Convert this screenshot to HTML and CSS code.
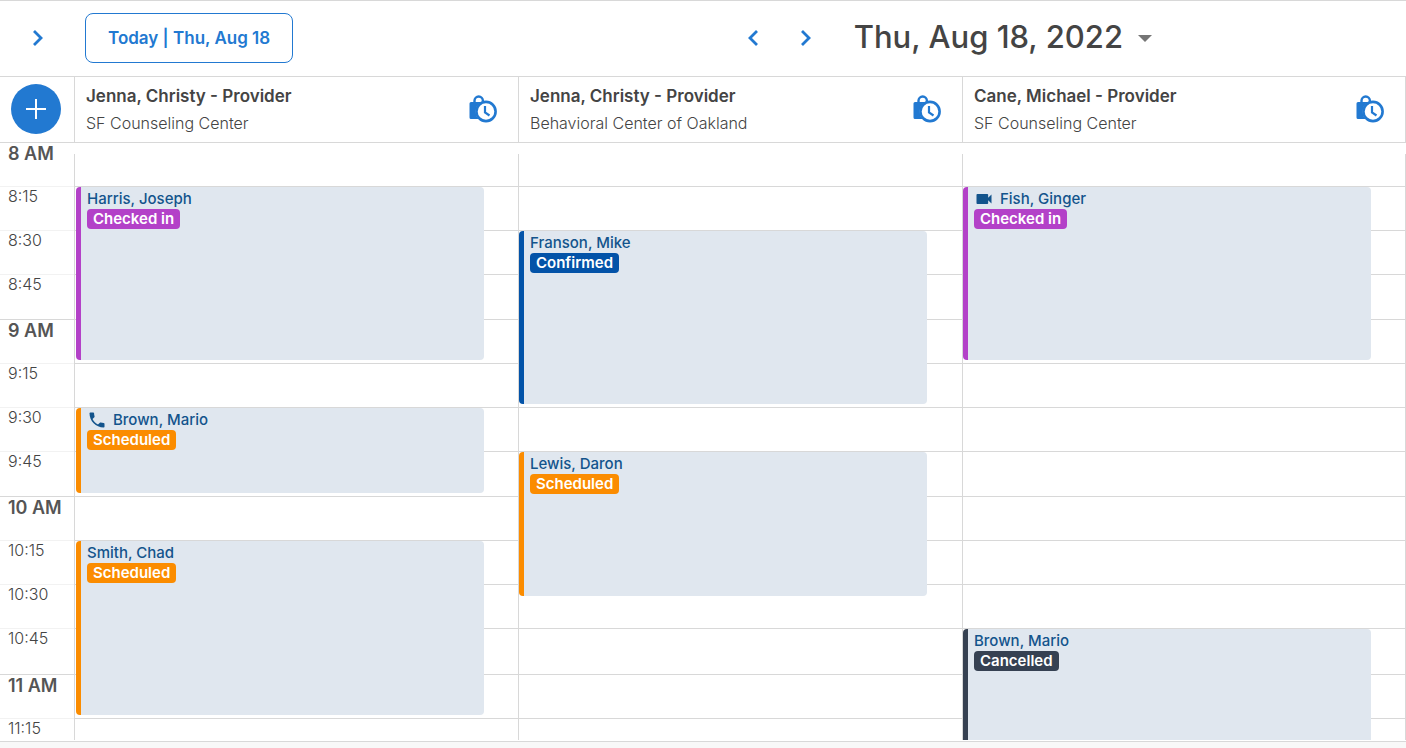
FILE: index.html
```html
<!DOCTYPE html>
<html lang="en">
<head>
    <meta charset="UTF-8">
    <meta name="viewport" content="width=device-width, initial-scale=1.0">
    <title>Calendar</title>
    <link rel="stylesheet" href="styles.css">
</head>
<body>
    <svg class="sprite" aria-hidden="true">
        <symbol id="icon-right" viewBox="0 0 24 24">
            <path d="M8 5l7 7-7 7" fill="none" stroke="currentColor" stroke-width="2.8"/>
        </symbol>
        <symbol id="icon-left" viewBox="0 0 24 24">
            <path d="M15 5l-7 7 7 7" fill="none" stroke="currentColor" stroke-width="2.8"/>
        </symbol>
        <symbol id="icon-block" viewBox="0 0 28 28">
            <path d="M5.500 9V5.700a4.200 4.200 0 0 1 8.400 0V9" fill="none" stroke="currentColor" stroke-width="2.400"/>
            <path d="M2 7h15v17H2a1.500 1.500 0 0 1-1.500-1.500v-14A1.500 1.500 0 0 1 2 7z" fill="currentColor"/>
            <circle cx="17" cy="16.500" r="10.500" fill="#fff"/>
            <circle cx="17" cy="16.500" r="9.600" fill="#fff" stroke="currentColor" stroke-width="2.600"/>
            <path d="M16 11v6.500l4.500 3" fill="none" stroke="currentColor" stroke-width="2.200"/>
        </symbol>
        <symbol id="icon-phone" viewBox="0 0 24 24">
            <path d="M6.62 10.79c1.44 2.83 3.76 5.14 6.59 6.59l2.2-2.2c.27-.27.67-.36 1.02-.24 1.12.37 2.33.57 3.57.57.55 0 1 .45 1 1V20c0 .55-.45 1-1 1-9.39 0-17-7.61-17-17 0-.55.45-1 1-1h3.5c.55 0 1 .45 1 1 0 1.25.2 2.45.57 3.57.11.35.03.74-.25 1.02l-2.2 2.2z" fill="currentColor"/>
        </symbol>
        <symbol id="icon-video" viewBox="0 0 24 24">
            <path d="M17 10.5V7c0-.55-.45-1-1-1H4c-.55 0-1 .45-1 1v10c0 .55.45 1 1 1h12c.55 0 1-.45 1-1v-3.500l4 4v-11l-4 4z" fill="currentColor"/>
        </symbol>
    </svg>

    <div class="toolbar">
        <button class="icon-btn expand" aria-label="Open sidebar"><svg><use href="#icon-right"/></svg></button>
        <button class="today">Today | Thu, Aug 18</button>
        <div class="date-nav">
            <button class="icon-btn" aria-label="Previous day"><svg><use href="#icon-left"/></svg></button>
            <button class="icon-btn" aria-label="Next day"><svg><use href="#icon-right"/></svg></button>
            <button class="date-picker">Thu, Aug 18, 2022 <span class="caret"></span></button>
        </div>
    </div>

    <div class="providers">
        <div class="corner">
            <button class="add" aria-label="Add appointment"></button>
        </div>
        <div class="provider">
            <div>
                <h2>Jenna, Christy - Provider</h2>
                <p>SF Counseling Center</p>
            </div>
            <button class="block-btn" aria-label="Block time"><svg><use href="#icon-block"/></svg></button>
        </div>
        <div class="provider">
            <div>
                <h2>Jenna, Christy - Provider</h2>
                <p>Behavioral Center of Oakland</p>
            </div>
            <button class="block-btn" aria-label="Block time"><svg><use href="#icon-block"/></svg></button>
        </div>
        <div class="provider">
            <div>
                <h2>Cane, Michael - Provider</h2>
                <p>SF Counseling Center</p>
            </div>
            <button class="block-btn" aria-label="Block time"><svg><use href="#icon-block"/></svg></button>
        </div>
    </div>

    <div class="schedule">
        <div class="times">
            <div class="hour">8 AM</div>
            <div>8:15</div>
            <div>8:30</div>
            <div>8:45</div>
            <div class="hour">9 AM</div>
            <div>9:15</div>
            <div>9:30</div>
            <div>9:45</div>
            <div class="hour">10 AM</div>
            <div>10:15</div>
            <div>10:30</div>
            <div>10:45</div>
            <div class="hour">11 AM</div>
            <div>11:15</div>
        </div>

        <div class="day">
            <div class="event checked-in t0815 m60">
                <a href="#">Harris, Joseph</a>
                <span class="status">Checked in</span>
            </div>
            <div class="event scheduled t0930 m30">
                <a href="#"><svg><use href="#icon-phone"/></svg>Brown, Mario</a>
                <span class="status">Scheduled</span>
            </div>
            <div class="event scheduled t1015 m60">
                <a href="#">Smith, Chad</a>
                <span class="status">Scheduled</span>
            </div>
        </div>

        <div class="day">
            <div class="event confirmed t0830 m60">
                <a href="#">Franson, Mike</a>
                <span class="status">Confirmed</span>
            </div>
            <div class="event scheduled t0945 m50">
                <a href="#">Lewis, Daron</a>
                <span class="status">Scheduled</span>
            </div>
        </div>

        <div class="day">
            <div class="event checked-in t0815 m60">
                <a href="#"><svg><use href="#icon-video"/></svg>Fish, Ginger</a>
                <span class="status">Checked in</span>
            </div>
            <div class="event cancelled t1045 m60">
                <a href="#">Brown, Mario</a>
                <span class="status">Cancelled</span>
            </div>
        </div>
    </div>
    <div class="footer"></div>

    <script>
        // Quarter hour lines behind the appointments, one row is 5 minutes
        document.querySelectorAll('.day').forEach(day => {
            for (let i = 13; i >= 0; i--) {
                const slot = document.createElement('div');
                slot.className = 'slot';
                slot.style.gridRow = `${i * 3 + 1} / span 3`;
                day.prepend(slot);
            }
        });
    </script>
</body>
</html>
```
FILE: styles.css
```css
* {
    box-sizing: border-box;
}
body {
    display: flex;
    flex-direction: column;
    height: 100vh;
    margin: 0;
    overflow: hidden;
    font-family: Inter, "Liberation Sans", sans-serif;
    color: #444;
    background-color: #fff;
}
button {
    padding: 0;
    border: none;
    background: none;
    font-family: inherit;
    color: #2279d1;
    cursor: pointer;
}
h2, p {
    margin: 0;
}
svg {
    display: block;
}
.sprite {
    display: none;
}

/* Toolbar */
.toolbar {
    display: flex;
    align-items: center;
    height: 77px;
    padding-bottom: 2px;
    border-top: 1px solid #d8d8d8;
    border-bottom: 1px solid #d8d8d8;
}
.icon-btn svg {
    width: 24px;
    height: 24px;
}
.expand {
    margin: 0 35px 0 26px;
}
.today {
    height: 50px;
    padding: 0 22px;
    border: 1px solid #2279d1;
    border-radius: 8px;
    font-size: 17px;
    line-height: 22px;
    font-weight: 600;
}
.date-nav {
    display: flex;
    align-items: center;
    gap: 28px;
    margin-left: auto;
    margin-right: 254px;
}
.date-picker {
    display: flex;
    align-items: center;
    gap: 15px;
    margin-left: 8px;
    padding-bottom: 3px;
    font-size: 31px;
    font-weight: 500;
    color: #444;
}
.caret {
    border: 7px solid transparent;
    border-top-color: #757575;
    border-bottom: none;
    margin-top: 5px;
}

/* Provider header */
.providers,
.schedule {
    display: grid;
    grid-template-columns: 74px repeat(3, 1fr);
}
.providers {
    height: 65px;
}
.corner {
    padding: 7px 0 0 11px;
}
.add {
    display: block;
    width: 50px;
    height: 50px;
    border-radius: 50%;
    background: linear-gradient(#fff, #fff) center / 20px 2px no-repeat,
        linear-gradient(#fff, #fff) center / 2px 20px no-repeat,
        #2279d1;
}
.provider {
    display: flex;
    justify-content: space-between;
    padding: 7px 21px 0 11px;
    border-left: 1px solid #d8d8d8;
}
.provider:last-child {
    border-right: 1px solid #d8d8d8;
}
.provider h2 {
    font-size: 17px;
    line-height: 24px;
    font-weight: 600;
}
.provider p {
    margin-top: 3px;
    font-size: 16px;
    line-height: 24px;
    font-weight: 300;
}
.block-btn {
    align-self: flex-start;
    margin-top: 11px;
}
.block-btn svg {
    width: 28px;
    height: 28px;
}

/* Schedule */
.schedule {
    flex: 1;
    min-height: 0;
    overflow: hidden;
}
.times,
.day {
    display: grid;
    grid-template-rows: repeat(2, 15px 15px 14px 15px 15px 14px 15px 15px 14px 15px 15px 15px) 15px 15px 14px 15px 15px 14px 15px 15px 14px 16px 15px 15px 15px 15px 14px 15px 15px 14px;
}
.times div {
    grid-row: span 3;
    padding-left: 8px;
    border-top: 1px solid #f2f2f2;
    font-size: 16px;
    line-height: 18px;
    font-weight: 300;
}
.times .hour {
    border-top-color: #d8d8d8;
    font-size: 18px;
    line-height: 22px;
    font-weight: 600;
    color: #555;
}
.day {
    background: linear-gradient(#d8d8d8, #d8d8d8) 0 12px / 1px 100% no-repeat;
}
.day:last-child {
    background: linear-gradient(#d8d8d8, #d8d8d8) 0 12px / 1px 100% no-repeat,
        linear-gradient(#d8d8d8, #d8d8d8) 100% 12px / 1px 100% no-repeat;
}
.slot {
    grid-column: 1;
    border-top: 1px solid #d8d8d8;
}

/* Appointments */
.event {
    grid-column: 1;
    width: 92%;
    margin: 1px 0 3px 1px;
    padding: 1px 0 0 6px;
    border-left: 5px solid;
    border-radius: 4px;
    background-color: #e0e7ef;
}
.day:nth-child(2) .event {
    margin-left: 2px;
}
.event a {
    display: flex;
    align-items: center;
    height: 21px;
    font-size: 15px;
    font-weight: 500;
    color: #13548c;
    text-decoration: none;
}
.event svg {
    width: 20px;
    height: 20px;
    margin-right: 6px;
}
.status {
    display: inline-block;
    height: 20px;
    padding: 0 6px;
    border-radius: 4px;
    font-size: 15px;
    line-height: 20px;
    font-weight: 600;
    color: #fff;
    vertical-align: top;
}
.checked-in {
    border-color: #b341c8;
}
.checked-in .status {
    background-color: #b341c8;
}
.scheduled {
    border-color: #fb8c00;
}
.scheduled .status {
    background-color: #fb8c00;
}
.confirmed {
    border-color: #0353a8;
}
.confirmed .status {
    background-color: #0353a8;
}
.cancelled {
    border-color: #364152;
}
.cancelled .status {
    background-color: #364152;
}

/* Start times */
.t0815 { grid-row-start: 4; }
.t0830 { grid-row-start: 7; }
.t0930 { grid-row-start: 19; }
.t0945 { grid-row-start: 22; }
.t1015 { grid-row-start: 28; }
.t1045 { grid-row-start: 34; }

/* Durations in minutes */
.m30 { grid-row-end: span 6; }
.m50 { grid-row-end: span 10; }
.m60 { grid-row-end: span 12; }

.footer {
    height: 7px;
    margin-top: 1px;
    border-top: 1px solid #d8d8d8;
    background-color: #f8f8f8;
}
```
